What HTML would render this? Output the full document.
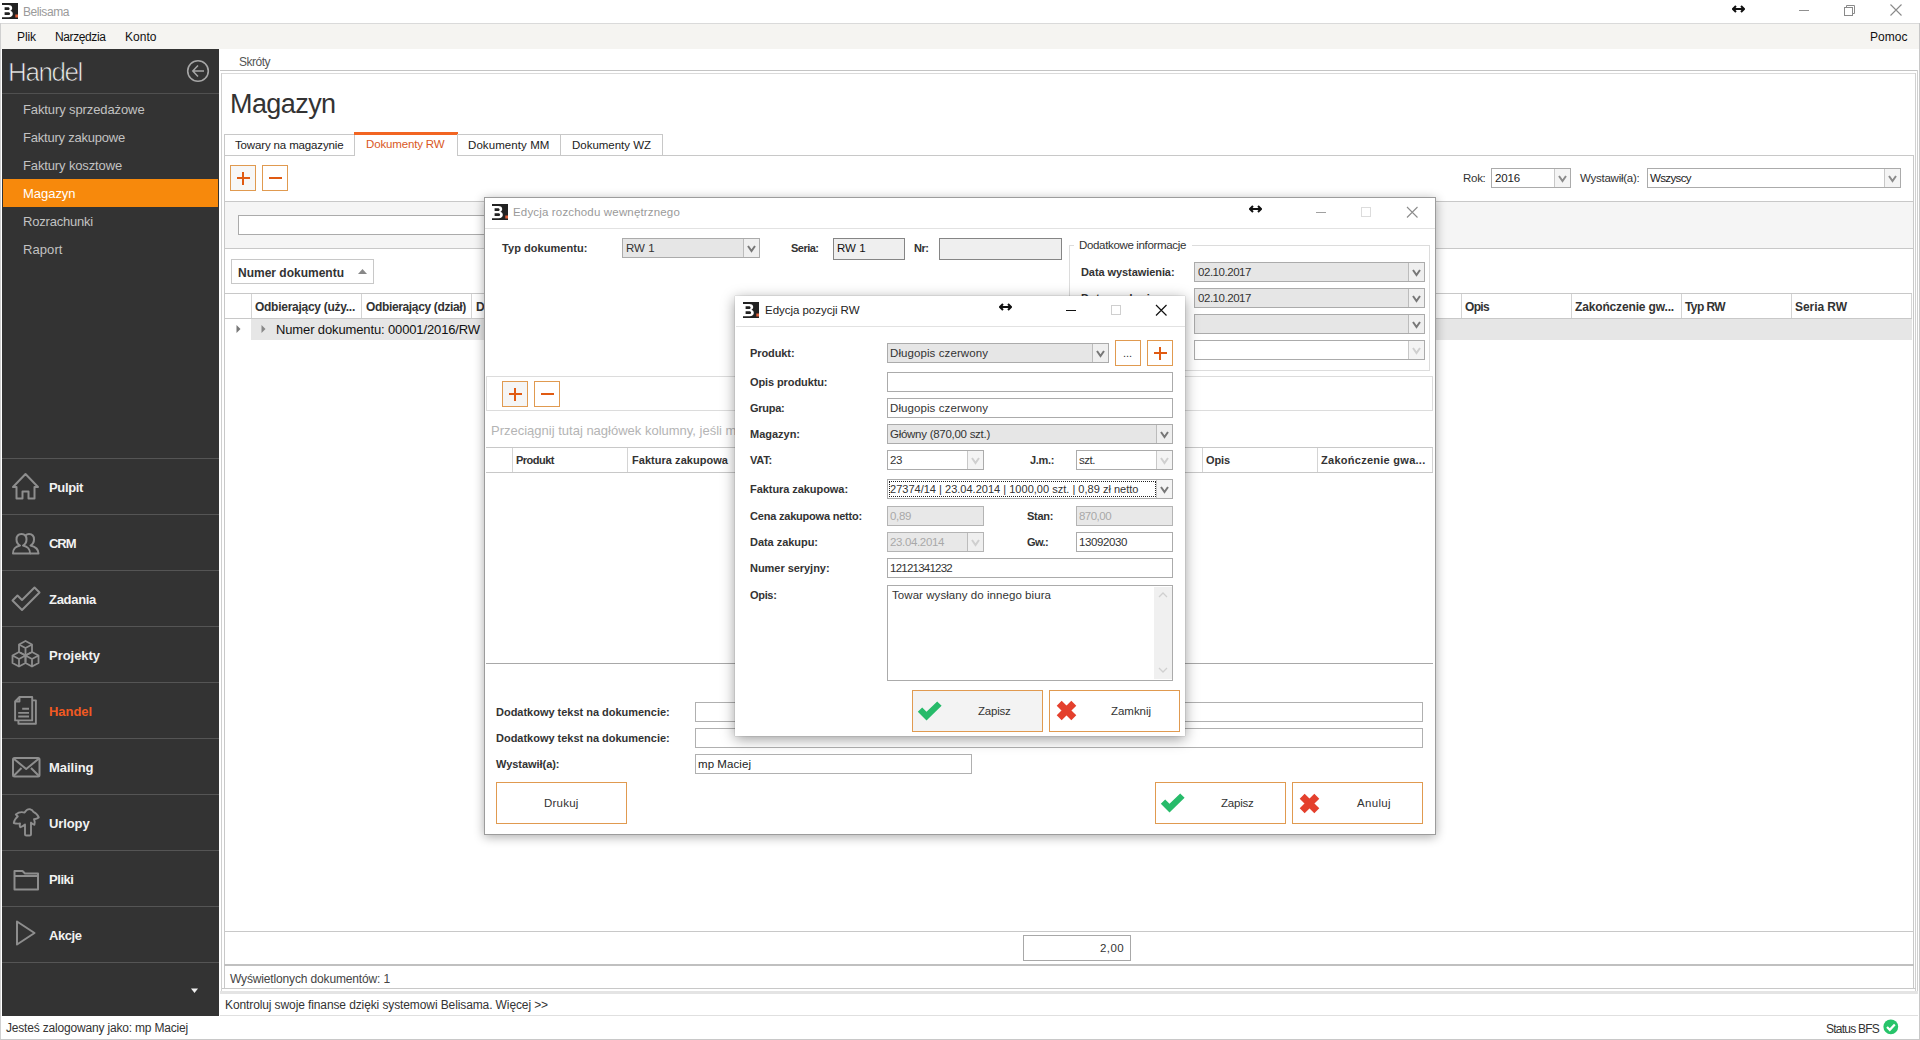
<!DOCTYPE html><html><head><meta charset="utf-8"><style>
html,body{margin:0;padding:0;width:1920px;height:1040px;overflow:hidden;background:#fff;font-family:"Liberation Sans",sans-serif;}
.b{position:absolute;box-sizing:border-box;}
.t{position:absolute;line-height:1;white-space:nowrap;}
</style></head><body>
<svg class="b" style="left:2px;top:3px;" width="16" height="16" viewBox="0 0 16 16"><rect x="0" y="0" width="16" height="16" fill="#222"/><path fill="#fff" d="M0,2 H6.2 C9,2 10.2,3.3 10.2,5 C10.2,6.4 9.4,7.4 8.3,7.8 C9.8,8.2 10.8,9.3 10.8,11 C10.8,13 9.3,14.2 6.6,14.2 H0 Z"/><path fill="#222" d="M2.6,4.3 H6 C7,4.3 7.6,4.9 7.6,5.7 C7.6,6.5 7,7 6,7 H2.6 Z M2.6,9.2 H6.3 C7.5,9.2 8.1,9.9 8.1,10.8 C8.1,11.7 7.5,12.1 6.3,12.1 H2.6 Z"/><rect x="13.3" y="11.5" width="2.7" height="3" fill="#e0603a"/></svg>
<div class="t" style="left:23px;top:6px;font-size:12px;color:#9a9a9a;letter-spacing:-0.419px;">Belisama</div>
<div class="b" style="left:0px;top:23px;width:1920px;height:1px;background:#dadada"></div>
<div class="b" style="left:1px;top:24px;width:1918px;height:25px;background:#f5f4f1"></div>
<div class="t" style="left:17px;top:31px;font-size:12px;color:#111;letter-spacing:-0.084px;">Plik</div>
<div class="t" style="left:55px;top:31px;font-size:12px;color:#111;letter-spacing:-0.391px;">Narzędzia</div>
<div class="t" style="left:125px;top:31px;font-size:12px;color:#111;letter-spacing:0.028px;">Konto</div>
<div class="t" style="left:1870px;top:31px;font-size:12px;color:#111;letter-spacing:0.030px;">Pomoc</div>
<div class="b" style="left:0px;top:23px;width:1px;height:1017px;background:#d0d0d0"></div>
<div class="b" style="left:1919px;top:23px;width:1px;height:1017px;background:#c8c8c8"></div>
<svg class="b" style="left:1732px;top:4px;" width="13" height="10" viewBox="0 0 13 10"><path d="M1,5 H12 M4,2 L1,5 L4,8 M9,2 L12,5 L9,8" stroke="#111" stroke-width="2" fill="none" stroke-linejoin="miter"/></svg>
<div class="b" style="left:1799px;top:10px;width:10px;height:1px;background:#909090"></div>
<svg class="b" style="left:1843px;top:4px;" width="13" height="12" viewBox="0 0 13 12"><rect x="1.5" y="3.5" width="8" height="8" fill="none" stroke="#8a8a8a"/><path d="M3.5,3.5 V1.5 H11.5 V9.5 H9.5" fill="none" stroke="#8a8a8a"/></svg>
<svg class="b" style="left:1889px;top:4px;" width="15" height="12" viewBox="0 0 15 12"><path d="M1.5,0.5 L12.5,11.5 M12.5,0.5 L1.5,11.5" stroke="#8a8a8a" stroke-width="1.1"/></svg>
<div class="b" style="left:2px;top:49px;width:217px;height:967px;background:#333333"></div>
<div class="t" style="left:8px;top:59px;font-size:26px;color:#ececec;letter-spacing:-1.399px;-webkit-text-stroke:0.7px #333">Handel</div>
<svg class="b" style="left:186px;top:59px;" width="24" height="24" viewBox="0 0 24 24"><circle cx="12" cy="12" r="10.3" fill="none" stroke="#a6a6a6" stroke-width="1.6"/><path d="M6.8,12 H18 M12,6.4 L6.8,12 L12,17.6" fill="none" stroke="#a6a6a6" stroke-width="1.5"/></svg>
<div class="b" style="left:2px;top:93px;width:217px;height:1px;background:#505050"></div>
<div class="b" style="left:3px;top:179px;width:215px;height:28px;background:#f7890c"></div>
<div class="t" style="left:23px;top:103px;font-size:13px;color:#c2c2c2;letter-spacing:-0.108px;">Faktury sprzedażowe</div>
<div class="t" style="left:23px;top:131px;font-size:13px;color:#c2c2c2;letter-spacing:-0.218px;">Faktury zakupowe</div>
<div class="t" style="left:23px;top:159px;font-size:13px;color:#c2c2c2;letter-spacing:-0.134px;">Faktury kosztowe</div>
<div class="t" style="left:23px;top:187px;font-size:13px;color:#fff;letter-spacing:-0.036px;">Magazyn</div>
<div class="t" style="left:23px;top:215px;font-size:13px;color:#c2c2c2;letter-spacing:-0.205px;">Rozrachunki</div>
<div class="t" style="left:23px;top:243px;font-size:13px;color:#c2c2c2;letter-spacing:0.080px;">Raport</div>
<div class="b" style="left:2px;top:458px;width:217px;height:1px;background:#555555"></div>
<div class="b" style="left:2px;top:514px;width:217px;height:1px;background:#555555"></div>
<div class="b" style="left:2px;top:570px;width:217px;height:1px;background:#555555"></div>
<div class="b" style="left:2px;top:626px;width:217px;height:1px;background:#555555"></div>
<div class="b" style="left:2px;top:682px;width:217px;height:1px;background:#555555"></div>
<div class="b" style="left:2px;top:738px;width:217px;height:1px;background:#555555"></div>
<div class="b" style="left:2px;top:794px;width:217px;height:1px;background:#555555"></div>
<div class="b" style="left:2px;top:850px;width:217px;height:1px;background:#555555"></div>
<div class="b" style="left:2px;top:906px;width:217px;height:1px;background:#555555"></div>
<div class="b" style="left:2px;top:962px;width:217px;height:1px;background:#555555"></div>
<div class="t" style="left:49px;top:481px;font-size:13px;font-weight:bold;color:#f2f2f2;letter-spacing:-0.351px;">Pulpit</div>
<div class="t" style="left:49px;top:537px;font-size:13px;font-weight:bold;color:#f2f2f2;letter-spacing:-1.035px;">CRM</div>
<div class="t" style="left:49px;top:593px;font-size:13px;font-weight:bold;color:#f2f2f2;letter-spacing:-0.304px;">Zadania</div>
<div class="t" style="left:49px;top:649px;font-size:13px;font-weight:bold;color:#f2f2f2;letter-spacing:-0.038px;">Projekty</div>
<div class="t" style="left:49px;top:705px;font-size:13px;font-weight:bold;color:#f15a22;letter-spacing:-0.057px;">Handel</div>
<div class="t" style="left:49px;top:761px;font-size:13px;font-weight:bold;color:#f2f2f2;letter-spacing:-0.039px;">Mailing</div>
<div class="t" style="left:49px;top:817px;font-size:13px;font-weight:bold;color:#f2f2f2;letter-spacing:-0.112px;">Urlopy</div>
<div class="t" style="left:49px;top:873px;font-size:13px;font-weight:bold;color:#f2f2f2;letter-spacing:-0.447px;">Pliki</div>
<div class="t" style="left:49px;top:929px;font-size:13px;font-weight:bold;color:#f2f2f2;letter-spacing:-0.438px;">Akcje</div>
<svg class="b" style="left:10px;top:472px;" width="32" height="30" viewBox="0 0 32 30"><path d="M15.5,2 L3,15 H6.5 V26.5 H12.5 V19.5 H18.5 V26.5 H24.5 V15 H28 Z" fill="none" stroke="#8e8e8e" stroke-width="2" stroke-linejoin="round"/></svg>
<svg class="b" style="left:10px;top:532px;" width="32" height="26" viewBox="0 0 32 26"><path d="M3,21.5 C3,16 6,14.5 10,13.5 C7.5,12 6.5,10 6.5,7.5 C6.5,4 8.5,2 11.5,2 C14.5,2 16.5,4 16.5,7.5 C16.5,10 15.5,12 13,13.5 C17,14.5 20,16 20,21.5 Z" fill="none" stroke="#8e8e8e" stroke-width="2" stroke-linejoin="round"/><path d="M15.5,3.5 C16.5,2.5 17.5,2 19,2 C22,2 24,4 24,7.5 C24,10 23,12 20.5,13.5 C24.5,14.5 28.5,16 28.5,21.5 H20" fill="none" stroke="#8e8e8e" stroke-width="2" stroke-linejoin="round"/></svg>
<svg class="b" style="left:10px;top:586px;" width="32" height="28" viewBox="0 0 32 28"><path d="M2.5,14.5 L7.5,9.5 L12,14 L24.5,1.5 L29.5,6.5 L12,24 Z" fill="none" stroke="#8e8e8e" stroke-width="2" stroke-linejoin="round"/></svg>
<svg class="b" style="left:10px;top:639px;" width="32" height="31" viewBox="0 0 32 31"><g fill="none" stroke="#8e8e8e" stroke-width="1.8" stroke-linejoin="round"><path d="M15.5,2 L22,5.5 V13 L15.5,16.5 L9,13 V5.5 Z M9,5.5 L15.5,9 L22,5.5 M15.5,9 V16.5"/><path d="M9,13 L15.5,16.5 V24 L9,27.5 L2.5,24 V16.5 Z M2.5,16.5 L9,20 L15.5,16.5 M9,20 V27.5"/><path d="M22,13 L28.5,16.5 V24 L22,27.5 L15.5,24 V16.5 Z M15.5,16.5 L22,20 L28.5,16.5 M22,20 V27.5"/></g></svg>
<svg class="b" style="left:10px;top:693px;" width="32" height="34" viewBox="0 0 32 34"><g fill="none" stroke="#8e8e8e" stroke-width="1.9" stroke-linejoin="round"><path d="M22.2,7.4 H25.9 V30.8 H8.4 V27.4"/><path d="M5.1,8.5 L9.5,4 H22.2 V27.4 H5.1 Z M5.1,8.5 H9.5 V4"/><path d="M12.2,15.8 H19 M8.2,19.9 H19 M8.2,23.5 H19"/></g></svg>
<svg class="b" style="left:10px;top:755px;" width="32" height="24" viewBox="0 0 32 24"><g fill="none" stroke="#8e8e8e" stroke-width="2" stroke-linejoin="round"><rect x="3" y="3" width="26.5" height="18.5" rx="1.5"/><path d="M3.5,3.5 L16.2,14 L29,3.5 M3.5,21 L11.5,13 M29,21 L21,13"/></g></svg>
<svg class="b" style="left:10px;top:806px;" width="32" height="32" viewBox="0 0 32 32"><path d="M15,28.5 V18.5 C13.2,20 11.8,21 10.2,21.2 C9.6,20 9.6,18.8 10,17.4 C8,17.8 5.6,17.6 3.8,17 C4.2,14.2 5.6,12 7.8,10.4 C6.8,9.8 6.2,9.2 5.8,8.4 C8.8,6 12,5.8 14.6,6.6 C16,4.2 18,3 19.8,3.2 C21.6,3.8 23,4.8 23.4,5.8 C25.8,6.8 27.8,9 28.8,11.4 C27.2,12.6 25.6,13 24,13.2 C24.8,15 24.9,17 24.4,18.8 C23,18.4 22,17.6 21,16.6 V28.5 C21,29.3 20.4,29.5 19.6,29.5 H16.4 C15.6,29.5 15,29.3 15,28.5 Z" fill="none" stroke="#8e8e8e" stroke-width="1.9" stroke-linejoin="round"/></svg>
<svg class="b" style="left:10px;top:867px;" width="32" height="26" viewBox="0 0 32 26"><path d="M4.5,4 H12.5 L15,6.5 H28 V22.5 H4.5 Z M4.5,9 H28" fill="none" stroke="#8e8e8e" stroke-width="2" stroke-linejoin="round"/></svg>
<svg class="b" style="left:10px;top:918px;" width="32" height="30" viewBox="0 0 32 30"><path d="M7,3.5 L24.5,15 L7,26.5 Z" fill="none" stroke="#8e8e8e" stroke-width="2" stroke-linejoin="round"/></svg>
<svg class="b" style="left:190px;top:987px;" width="10" height="8" viewBox="0 0 10 8"><path d="M1,1.5 H8 L4.5,6 Z" fill="#f0f0f0"/></svg>
<div class="t" style="left:239px;top:56px;font-size:12px;color:#555;letter-spacing:-0.501px;">Skróty</div>
<div class="b" style="left:220px;top:70px;width:1698px;height:1px;background:#c4c4c4"></div>
<div class="b" style="left:1917px;top:70px;width:1px;height:921px;background:#d0d0d0"></div>
<div class="b" style="left:221px;top:73px;width:1695px;height:1px;background:#dadada"></div>
<div class="b" style="left:221px;top:73px;width:1px;height:918px;background:#d0d0d0"></div>
<div class="b" style="left:1915px;top:73px;width:1px;height:918px;background:#d0d0d0"></div>
<div class="t" style="left:230px;top:91px;font-size:27px;color:#333;letter-spacing:-0.579px;">Magazyn</div>
<div class="b" style="left:224px;top:134px;width:131px;height:22px;background:#fff;border:1px solid #c8c8c8;border-bottom:none"></div>
<div class="b" style="left:354px;top:132px;width:104px;height:24px;background:#fff;border-left:1px solid #c8c8c8;border-right:1px solid #c8c8c8"></div>
<div class="b" style="left:354px;top:132px;width:104px;height:3px;background:#f26522"></div>
<div class="b" style="left:457px;top:134px;width:105px;height:22px;background:#fff;border:1px solid #c8c8c8;border-bottom:none"></div>
<div class="b" style="left:560px;top:134px;width:103px;height:22px;background:#fff;border:1px solid #c8c8c8;border-bottom:none"></div>
<div class="t" style="left:235px;top:140px;font-size:11.5px;color:#222;letter-spacing:-0.143px;">Towary na magazynie</div>
<div class="t" style="left:366px;top:139px;font-size:11.5px;color:#d9581e;letter-spacing:-0.151px;">Dokumenty RW</div>
<div class="t" style="left:468px;top:140px;font-size:11.5px;color:#222;letter-spacing:0.082px;">Dokumenty MM</div>
<div class="t" style="left:572px;top:140px;font-size:11.5px;color:#222;letter-spacing:-0.020px;">Dokumenty WZ</div>
<div class="b" style="left:224px;top:155px;width:1690px;height:834px;border:1px solid #c8c8c8;border-bottom:none"></div>
<div class="b" style="left:355px;top:155px;width:102px;height:1px;background:#fff"></div>
<div class="b" style="left:230px;top:165px;width:26px;height:26px;background:#f7f7f7;border:1px solid #e09a50"></div>
<div class="b" style="left:237px;top:177px;width:13px;height:2px;background:#e05a12"></div>
<div class="b" style="left:242px;top:172px;width:2px;height:13px;background:#e05a12"></div>
<div class="b" style="left:262px;top:165px;width:26px;height:26px;background:#fff;border:1px solid #e09a50"></div>
<div class="b" style="left:269px;top:177px;width:13px;height:2px;background:#e05a12"></div>
<div class="t" style="left:1463px;top:173px;font-size:11.5px;color:#333;letter-spacing:-0.286px;">Rok:</div>
<div class="b" style="left:1491px;top:168px;width:80px;height:20px;background:#fff;border:1px solid #ababab"></div>
<div class="b" style="left:1554px;top:169px;width:1px;height:18px;background:#c8c8c8"></div>
<div class="b" style="left:1555px;top:169px;width:15px;height:18px;background:#f4f4f4"></div>
<svg class="b" style="left:1557px;top:174px;" width="11" height="9" viewBox="0 0 11 9"><polyline points="2,2 5.5,7 9,2" fill="none" stroke="#8a8a8a" stroke-width="2"/></svg>
<div class="t" style="left:1495px;top:173px;font-size:11.5px;color:#222;letter-spacing:-0.146px;">2016</div>
<div class="t" style="left:1580px;top:173px;font-size:11.5px;color:#333;letter-spacing:-0.251px;">Wystawił(a):</div>
<div class="b" style="left:1647px;top:168px;width:254px;height:20px;background:#fff;border:1px solid #ababab"></div>
<div class="b" style="left:1884px;top:169px;width:1px;height:18px;background:#c8c8c8"></div>
<div class="b" style="left:1885px;top:169px;width:15px;height:18px;background:#f4f4f4"></div>
<svg class="b" style="left:1887px;top:174px;" width="11" height="9" viewBox="0 0 11 9"><polyline points="2,2 5.5,7 9,2" fill="none" stroke="#8a8a8a" stroke-width="2"/></svg>
<div class="t" style="left:1650px;top:173px;font-size:11.5px;color:#222;letter-spacing:-0.622px;">Wszyscy</div>
<div class="b" style="left:225px;top:201px;width:1688px;height:48px;background:#f5f5f5;border-top:1px solid #c8c8c8;border-bottom:1px solid #c8c8c8"></div>
<div class="b" style="left:238px;top:215px;width:800px;height:20px;background:#fff;border:1px solid #ababab"></div>
<div class="b" style="left:231px;top:259px;width:143px;height:25px;border:1px solid #c8c8c8;background:#fff"></div>
<div class="t" style="left:238px;top:267px;font-size:12px;font-weight:bold;color:#333;letter-spacing:-0.001px;">Numer dokumentu</div>
<svg class="b" style="left:357px;top:268px;" width="11" height="7" viewBox="0 0 11 7"><path d="M1,6 L5.5,1 L10,6 Z" fill="#888"/></svg>
<div class="b" style="left:225px;top:293px;width:1687px;height:1px;background:#c8c8c8"></div>
<div class="b" style="left:225px;top:318px;width:1687px;height:1px;background:#c8c8c8"></div>
<div class="b" style="left:251px;top:294px;width:1px;height:24px;background:#d4d4d4"></div>
<div class="b" style="left:361px;top:294px;width:1px;height:24px;background:#d4d4d4"></div>
<div class="b" style="left:471px;top:294px;width:1px;height:24px;background:#d4d4d4"></div>
<div class="b" style="left:581px;top:294px;width:1px;height:24px;background:#d4d4d4"></div>
<div class="b" style="left:691px;top:294px;width:1px;height:24px;background:#d4d4d4"></div>
<div class="b" style="left:801px;top:294px;width:1px;height:24px;background:#d4d4d4"></div>
<div class="b" style="left:911px;top:294px;width:1px;height:24px;background:#d4d4d4"></div>
<div class="b" style="left:1021px;top:294px;width:1px;height:24px;background:#d4d4d4"></div>
<div class="b" style="left:1131px;top:294px;width:1px;height:24px;background:#d4d4d4"></div>
<div class="b" style="left:1241px;top:294px;width:1px;height:24px;background:#d4d4d4"></div>
<div class="b" style="left:1351px;top:294px;width:1px;height:24px;background:#d4d4d4"></div>
<div class="b" style="left:1461px;top:294px;width:1px;height:24px;background:#d4d4d4"></div>
<div class="b" style="left:1571px;top:294px;width:1px;height:24px;background:#d4d4d4"></div>
<div class="b" style="left:1681px;top:294px;width:1px;height:24px;background:#d4d4d4"></div>
<div class="b" style="left:1791px;top:294px;width:1px;height:24px;background:#d4d4d4"></div>
<div class="b" style="left:1911px;top:294px;width:1px;height:24px;background:#d4d4d4"></div>
<div class="t" style="left:255px;top:301px;font-size:12px;font-weight:bold;color:#333;letter-spacing:-0.271px;">Odbierający (uży...</div>
<div class="t" style="left:366px;top:301px;font-size:12px;font-weight:bold;color:#333;letter-spacing:-0.353px;">Odbierający (dział)</div>
<div class="t" style="left:476px;top:301px;font-size:12px;font-weight:bold;color:#333;letter-spacing:0.039px;max-width:105px;overflow:hidden">Data wystawienia</div>
<div class="t" style="left:1465px;top:301px;font-size:12px;font-weight:bold;color:#333;letter-spacing:-0.668px;">Opis</div>
<div class="t" style="left:1575px;top:301px;font-size:12px;font-weight:bold;color:#333;letter-spacing:-0.152px;">Zakończenie gw...</div>
<div class="t" style="left:1685px;top:301px;font-size:12px;font-weight:bold;color:#333;letter-spacing:-0.592px;">Typ RW</div>
<div class="t" style="left:1795px;top:301px;font-size:12px;font-weight:bold;color:#333;letter-spacing:-0.058px;">Seria RW</div>
<div class="b" style="left:251px;top:319px;width:1661px;height:21px;background:#e6e6e6"></div>
<svg class="b" style="left:235px;top:324px;" width="7" height="10" viewBox="0 0 7 10"><path d="M1.5,1 L5.5,5 L1.5,9 Z" fill="#777"/></svg>
<svg class="b" style="left:260px;top:324px;" width="7" height="10" viewBox="0 0 7 10"><path d="M1.5,1 L5.5,5 L1.5,9 Z" fill="#888"/></svg>
<div class="t" style="left:276px;top:323px;font-size:13px;color:#111;letter-spacing:-0.129px;">Numer dokumentu: 00001/2016/RW</div>
<div class="b" style="left:225px;top:931px;width:1688px;height:1px;background:#c8c8c8"></div>
<div class="b" style="left:1023px;top:935px;width:108px;height:26px;background:#fff;border:1px solid #a8a8a8"></div>
<div class="t" style="left:1100px;top:943px;font-size:11.5px;color:#333;letter-spacing:0.404px;">2,00</div>
<div class="b" style="left:224px;top:964px;width:1690px;height:2px;background:#c0c0c0"></div>
<div class="t" style="left:230px;top:973px;font-size:12px;color:#444;letter-spacing:-0.147px;">Wyświetlonych dokumentów: 1</div>
<div class="b" style="left:222px;top:988px;width:1694px;height:1px;background:#c8c8c8"></div>
<div class="b" style="left:220px;top:991px;width:1698px;height:3px;background:#e4e4e4"></div>
<div class="t" style="left:225px;top:999px;font-size:12px;color:#333;letter-spacing:-0.108px;">Kontroluj swoje finanse dzięki systemowi Belisama. Więcej &gt;&gt;</div>
<div class="b" style="left:220px;top:1015px;width:1698px;height:1px;background:#e0e0e0"></div>
<div class="t" style="left:6px;top:1022px;font-size:12px;color:#333;letter-spacing:-0.184px;">Jesteś zalogowany jako: mp Maciej</div>
<div class="t" style="left:1826px;top:1023px;font-size:12px;color:#333;letter-spacing:-0.769px;">Status BFS</div>
<svg class="b" style="left:1883px;top:1019px;" width="16" height="16" viewBox="0 0 16 16"><circle cx="7.8" cy="7.8" r="7.4" fill="#27c46a"/><path d="M4,8 L6.8,10.8 L11.8,5.5" fill="none" stroke="#fff" stroke-width="2.2"/></svg>
<div class="b" style="left:0px;top:1039px;width:1920px;height:1px;background:#c8c8c8"></div>
<div class="b" style="left:484px;top:197px;width:952px;height:638px;background:#fff;border:1px solid #9c9c9c;box-shadow:0 2px 10px rgba(0,0,0,0.33)"></div>
<div class="b" style="left:485px;top:228px;width:950px;height:1px;background:#e2e2e2"></div>
<svg class="b" style="left:492px;top:204px;" width="16" height="16" viewBox="0 0 16 16"><rect x="0" y="0" width="16" height="16" fill="#222"/><path fill="#fff" d="M0,2 H6.2 C9,2 10.2,3.3 10.2,5 C10.2,6.4 9.4,7.4 8.3,7.8 C9.8,8.2 10.8,9.3 10.8,11 C10.8,13 9.3,14.2 6.6,14.2 H0 Z"/><path fill="#222" d="M2.6,4.3 H6 C7,4.3 7.6,4.9 7.6,5.7 C7.6,6.5 7,7 6,7 H2.6 Z M2.6,9.2 H6.3 C7.5,9.2 8.1,9.9 8.1,10.8 C8.1,11.7 7.5,12.1 6.3,12.1 H2.6 Z"/><rect x="13.3" y="11.5" width="2.7" height="3" fill="#e0603a"/></svg>
<div class="t" style="left:513px;top:207px;font-size:11.5px;color:#9a9a9a;letter-spacing:0.165px;">Edycja rozchodu wewnętrznego</div>
<svg class="b" style="left:1249px;top:204px;" width="13" height="10" viewBox="0 0 13 10"><path d="M1,5 H12 M4,2 L1,5 L4,8 M9,2 L12,5 L9,8" stroke="#111" stroke-width="2" fill="none"/></svg>
<div class="b" style="left:1316px;top:212px;width:10px;height:1px;background:#a0a0a0"></div>
<svg class="b" style="left:1360px;top:206px;" width="12" height="12" viewBox="0 0 12 12"><rect x="1.5" y="1.5" width="9" height="9" fill="none" stroke="#dcdcdc"/></svg>
<svg class="b" style="left:1406px;top:206px;" width="13" height="13" viewBox="0 0 13 13"><path d="M1,1 L11.5,11.5 M11.5,1 L1,11.5" stroke="#8c8c8c" stroke-width="1.1"/></svg>
<div class="t" style="left:502px;top:243px;font-size:11px;font-weight:bold;color:#333;letter-spacing:0.055px;">Typ dokumentu:</div>
<div class="b" style="left:622px;top:238px;width:138px;height:20px;background:#e6e6e6;border:1px solid #ababab"></div>
<div class="b" style="left:743px;top:239px;width:1px;height:18px;background:#bcbcbc"></div>
<div class="b" style="left:744px;top:239px;width:15px;height:18px;background:#efefef"></div>
<svg class="b" style="left:746px;top:244px;" width="11" height="9" viewBox="0 0 11 9"><polyline points="2,2 5.5,7 9,2" fill="none" stroke="#777" stroke-width="2"/></svg>
<div class="t" style="left:626px;top:243px;font-size:11.5px;color:#333;">RW 1</div>
<div class="t" style="left:791px;top:243px;font-size:11px;font-weight:bold;color:#333;letter-spacing:-0.512px;">Seria:</div>
<div class="b" style="left:833px;top:238px;width:72px;height:22px;background:#efefef;border:1px solid #858585"></div>
<div class="t" style="left:837px;top:243px;font-size:11.5px;color:#111;">RW 1</div>
<div class="t" style="left:914px;top:243px;font-size:11px;font-weight:bold;color:#333;letter-spacing:-0.463px;">Nr:</div>
<div class="b" style="left:939px;top:238px;width:123px;height:22px;background:#efefef;border:1px solid #858585"></div>
<div class="b" style="left:1069px;top:245px;width:361px;height:126px;border:1px solid #dcdcdc"></div>
<div class="b" style="left:1074px;top:238px;width:118px;height:14px;background:#fff"></div>
<div class="t" style="left:1079px;top:240px;font-size:11.5px;color:#333;letter-spacing:-0.339px;">Dodatkowe informacje</div>
<div class="t" style="left:1081px;top:267px;font-size:11px;font-weight:bold;color:#333;letter-spacing:-0.074px;">Data wystawienia:</div>
<div class="t" style="left:1081px;top:293px;font-size:11px;font-weight:bold;color:#333;letter-spacing:0.464px;">Data wydania:</div>
<div class="b" style="left:1194px;top:262px;width:231px;height:20px;background:#e6e6e6;border:1px solid #ababab"></div>
<div class="b" style="left:1408px;top:263px;width:1px;height:18px;background:#bcbcbc"></div>
<div class="b" style="left:1409px;top:263px;width:15px;height:18px;background:#efefef"></div>
<svg class="b" style="left:1411px;top:268px;" width="11" height="9" viewBox="0 0 11 9"><polyline points="2,2 5.5,7 9,2" fill="none" stroke="#777" stroke-width="2"/></svg>
<div class="b" style="left:1194px;top:288px;width:231px;height:20px;background:#e6e6e6;border:1px solid #ababab"></div>
<div class="b" style="left:1408px;top:289px;width:1px;height:18px;background:#bcbcbc"></div>
<div class="b" style="left:1409px;top:289px;width:15px;height:18px;background:#efefef"></div>
<svg class="b" style="left:1411px;top:294px;" width="11" height="9" viewBox="0 0 11 9"><polyline points="2,2 5.5,7 9,2" fill="none" stroke="#777" stroke-width="2"/></svg>
<div class="b" style="left:1194px;top:314px;width:231px;height:20px;background:#e6e6e6;border:1px solid #ababab"></div>
<div class="b" style="left:1408px;top:315px;width:1px;height:18px;background:#bcbcbc"></div>
<div class="b" style="left:1409px;top:315px;width:15px;height:18px;background:#efefef"></div>
<svg class="b" style="left:1411px;top:320px;" width="11" height="9" viewBox="0 0 11 9"><polyline points="2,2 5.5,7 9,2" fill="none" stroke="#777" stroke-width="2"/></svg>
<div class="b" style="left:1194px;top:340px;width:231px;height:20px;background:#fff;border:1px solid #ababab"></div>
<div class="b" style="left:1408px;top:341px;width:1px;height:18px;background:#c8c8c8"></div>
<div class="b" style="left:1409px;top:341px;width:15px;height:18px;background:#f4f4f4"></div>
<svg class="b" style="left:1411px;top:346px;" width="11" height="9" viewBox="0 0 11 9"><polyline points="2,2 5.5,7 9,2" fill="none" stroke="#cfcfcf" stroke-width="2"/></svg>
<div class="t" style="left:1198px;top:267px;font-size:11.5px;color:#333;letter-spacing:-0.456px;">02.10.2017</div>
<div class="t" style="left:1198px;top:293px;font-size:11.5px;color:#333;letter-spacing:-0.456px;">02.10.2017</div>
<div class="b" style="left:486px;top:376px;width:947px;height:35px;border:1px solid #dcdcdc"></div>
<div class="b" style="left:502px;top:381px;width:26px;height:26px;background:#f5f5f5;border:1px solid #e09a50"></div>
<div class="b" style="left:509px;top:393px;width:13px;height:2px;background:#e05a12"></div>
<div class="b" style="left:514px;top:388px;width:2px;height:13px;background:#e05a12"></div>
<div class="b" style="left:534px;top:381px;width:26px;height:26px;background:#fff;border:1px solid #e09a50"></div>
<div class="b" style="left:541px;top:393px;width:13px;height:2px;background:#e05a12"></div>
<div class="t" style="left:491px;top:424px;font-size:13px;color:#b4b4b4;">Przeciągnij tutaj nagłówek kolumny, jeśli ma ona być grupowana</div>
<div class="b" style="left:486px;top:447px;width:947px;height:1px;background:#c8c8c8"></div>
<div class="b" style="left:486px;top:472px;width:947px;height:1px;background:#c8c8c8"></div>
<div class="b" style="left:512px;top:448px;width:1px;height:24px;background:#d4d4d4"></div>
<div class="b" style="left:627px;top:448px;width:1px;height:24px;background:#d4d4d4"></div>
<div class="b" style="left:742px;top:448px;width:1px;height:24px;background:#d4d4d4"></div>
<div class="b" style="left:857px;top:448px;width:1px;height:24px;background:#d4d4d4"></div>
<div class="b" style="left:972px;top:448px;width:1px;height:24px;background:#d4d4d4"></div>
<div class="b" style="left:1087px;top:448px;width:1px;height:24px;background:#d4d4d4"></div>
<div class="b" style="left:1202px;top:448px;width:1px;height:24px;background:#d4d4d4"></div>
<div class="b" style="left:1317px;top:448px;width:1px;height:24px;background:#d4d4d4"></div>
<div class="b" style="left:1432px;top:448px;width:1px;height:24px;background:#d4d4d4"></div>
<div class="t" style="left:516px;top:455px;font-size:11px;font-weight:bold;color:#333;letter-spacing:-0.508px;">Produkt</div>
<div class="t" style="left:632px;top:455px;font-size:11px;font-weight:bold;color:#333;letter-spacing:0.040px;">Faktura zakupowa</div>
<div class="t" style="left:1206px;top:455px;font-size:11px;font-weight:bold;color:#333;letter-spacing:-0.112px;">Opis</div>
<div class="t" style="left:1321px;top:455px;font-size:11px;font-weight:bold;color:#333;letter-spacing:0.270px;">Zakończenie gwa...</div>
<div class="b" style="left:486px;top:663px;width:947px;height:1px;background:#a8a8a8"></div>
<div class="t" style="left:496px;top:707px;font-size:11px;font-weight:bold;color:#333;letter-spacing:-0.017px;">Dodatkowy tekst na dokumencie:</div>
<div class="t" style="left:496px;top:733px;font-size:11px;font-weight:bold;color:#333;letter-spacing:-0.017px;">Dodatkowy tekst na dokumencie:</div>
<div class="t" style="left:496px;top:759px;font-size:11px;font-weight:bold;color:#333;letter-spacing:-0.040px;">Wystawił(a):</div>
<div class="b" style="left:695px;top:702px;width:728px;height:20px;background:#fff;border:1px solid #b0b0b0"></div>
<div class="b" style="left:695px;top:728px;width:728px;height:20px;background:#fff;border:1px solid #b0b0b0"></div>
<div class="b" style="left:695px;top:754px;width:277px;height:20px;background:#fff;border:1px solid #b0b0b0"></div>
<div class="t" style="left:698px;top:759px;font-size:11.5px;color:#222;letter-spacing:0.067px;">mp Maciej</div>
<div class="b" style="left:496px;top:782px;width:131px;height:42px;background:#fff;border:1px solid #e09a50"></div>
<div class="t" style="left:544px;top:798px;font-size:11.5px;color:#333;letter-spacing:0.212px;">Drukuj</div>
<div class="b" style="left:1155px;top:782px;width:131px;height:42px;background:#fff;border:1px solid #e09a50"></div>
<svg class="b" style="left:1160px;top:793px;" width="26" height="21" viewBox="0 0 26 21"><polygon points="0.8,10.8 5.2,6.6 9.5,10.8 20.2,0.5 24.6,4.7 9.5,19.6" fill="#27bb6a"/></svg>
<div class="t" style="left:1221px;top:798px;font-size:11.5px;color:#333;letter-spacing:-0.229px;">Zapisz</div>
<div class="b" style="left:1292px;top:782px;width:131px;height:42px;background:#fff;border:1px solid #e09a50"></div>
<svg class="b" style="left:1299px;top:793px;" width="22" height="21" viewBox="0 0 22 21"><path d="M3.2,3.2 L17.8,17.8 M17.8,3.2 L3.2,17.8" stroke="#e4402d" stroke-width="7"/></svg>
<div class="t" style="left:1357px;top:798px;font-size:11.5px;color:#333;letter-spacing:0.339px;">Anuluj</div>
<div class="b" style="left:735px;top:296px;width:450px;height:440px;background:#fff;box-shadow:0 0 1px rgba(0,0,0,0.35),0 3px 13px rgba(0,0,0,0.40)"></div>
<div class="b" style="left:736px;top:326px;width:449px;height:1px;background:#e2e2e2"></div>
<svg class="b" style="left:743px;top:302px;" width="16" height="16" viewBox="0 0 16 16"><rect x="0" y="0" width="16" height="16" fill="#222"/><path fill="#fff" d="M0,2 H6.2 C9,2 10.2,3.3 10.2,5 C10.2,6.4 9.4,7.4 8.3,7.8 C9.8,8.2 10.8,9.3 10.8,11 C10.8,13 9.3,14.2 6.6,14.2 H0 Z"/><path fill="#222" d="M2.6,4.3 H6 C7,4.3 7.6,4.9 7.6,5.7 C7.6,6.5 7,7 6,7 H2.6 Z M2.6,9.2 H6.3 C7.5,9.2 8.1,9.9 8.1,10.8 C8.1,11.7 7.5,12.1 6.3,12.1 H2.6 Z"/><rect x="13.3" y="11.5" width="2.7" height="3" fill="#e0603a"/></svg>
<div class="t" style="left:765px;top:305px;font-size:11.5px;color:#222;letter-spacing:-0.030px;">Edycja pozycji RW</div>
<svg class="b" style="left:999px;top:302px;" width="13" height="10" viewBox="0 0 13 10"><path d="M1,5 H12 M4,2 L1,5 L4,8 M9,2 L12,5 L9,8" stroke="#111" stroke-width="2" fill="none"/></svg>
<div class="b" style="left:1066px;top:310px;width:10px;height:1px;background:#111"></div>
<svg class="b" style="left:1110px;top:304px;" width="12" height="12" viewBox="0 0 12 12"><rect x="1.5" y="1.5" width="9" height="9" fill="none" stroke="#cfcfcf"/></svg>
<svg class="b" style="left:1155px;top:304px;" width="13" height="13" viewBox="0 0 13 13"><path d="M1,1 L11.5,11.5 M11.5,1 L1,11.5" stroke="#111" stroke-width="1.2"/></svg>
<div class="t" style="left:750px;top:348px;font-size:11px;font-weight:bold;color:#333;letter-spacing:-0.090px;">Produkt:</div>
<div class="t" style="left:750px;top:377px;font-size:11px;font-weight:bold;color:#333;letter-spacing:-0.102px;">Opis produktu:</div>
<div class="t" style="left:750px;top:403px;font-size:11px;font-weight:bold;color:#333;letter-spacing:-0.259px;">Grupa:</div>
<div class="t" style="left:750px;top:429px;font-size:11px;font-weight:bold;color:#333;letter-spacing:-0.015px;">Magazyn:</div>
<div class="t" style="left:750px;top:455px;font-size:11px;font-weight:bold;color:#333;letter-spacing:-0.203px;">VAT:</div>
<div class="t" style="left:750px;top:484px;font-size:11px;font-weight:bold;color:#333;letter-spacing:-0.060px;">Faktura zakupowa:</div>
<div class="t" style="left:750px;top:511px;font-size:11px;font-weight:bold;color:#333;letter-spacing:-0.206px;">Cena zakupowa netto:</div>
<div class="t" style="left:750px;top:537px;font-size:11px;font-weight:bold;color:#333;letter-spacing:-0.038px;">Data zakupu:</div>
<div class="t" style="left:750px;top:563px;font-size:11px;font-weight:bold;color:#333;letter-spacing:-0.042px;">Numer seryjny:</div>
<div class="t" style="left:750px;top:590px;font-size:11px;font-weight:bold;color:#333;letter-spacing:-0.322px;">Opis:</div>
<div class="t" style="left:1030px;top:455px;font-size:11px;font-weight:bold;color:#333;letter-spacing:-0.335px;">J.m.:</div>
<div class="t" style="left:1027px;top:511px;font-size:11px;font-weight:bold;color:#333;letter-spacing:-0.300px;">Stan:</div>
<div class="t" style="left:1027px;top:537px;font-size:11px;font-weight:bold;color:#333;letter-spacing:-0.606px;">Gw.:</div>
<div class="b" style="left:887px;top:343px;width:222px;height:20px;background:#e6e6e6;border:1px solid #ababab"></div>
<div class="b" style="left:1092px;top:344px;width:1px;height:18px;background:#bcbcbc"></div>
<div class="b" style="left:1093px;top:344px;width:15px;height:18px;background:#efefef"></div>
<svg class="b" style="left:1095px;top:349px;" width="11" height="9" viewBox="0 0 11 9"><polyline points="2,2 5.5,7 9,2" fill="none" stroke="#777" stroke-width="2"/></svg>
<div class="t" style="left:890px;top:348px;font-size:11.5px;color:#333;letter-spacing:0.087px;">Długopis czerwony</div>
<div class="b" style="left:1115px;top:340px;width:26px;height:26px;background:#fff;border:1px solid #e09a50"></div>
<div class="t" style="left:1123px;top:348px;font-size:11px;color:#333;">...</div>
<div class="b" style="left:1147px;top:340px;width:26px;height:26px;background:#fff;border:1px solid #e09a50"></div>
<div class="b" style="left:1154px;top:352px;width:13px;height:2px;background:#e05a12"></div>
<div class="b" style="left:1159px;top:347px;width:2px;height:13px;background:#e05a12"></div>
<div class="b" style="left:887px;top:372px;width:286px;height:20px;background:#fff;border:1px solid #ababab"></div>
<div class="b" style="left:887px;top:398px;width:286px;height:20px;background:#fff;border:1px solid #ababab"></div>
<div class="t" style="left:890px;top:403px;font-size:11.5px;color:#333;letter-spacing:0.087px;">Długopis czerwony</div>
<div class="b" style="left:887px;top:424px;width:286px;height:20px;background:#e6e6e6;border:1px solid #ababab"></div>
<div class="b" style="left:1156px;top:425px;width:1px;height:18px;background:#bcbcbc"></div>
<div class="b" style="left:1157px;top:425px;width:15px;height:18px;background:#efefef"></div>
<svg class="b" style="left:1159px;top:430px;" width="11" height="9" viewBox="0 0 11 9"><polyline points="2,2 5.5,7 9,2" fill="none" stroke="#777" stroke-width="2"/></svg>
<div class="t" style="left:890px;top:429px;font-size:11.5px;color:#333;letter-spacing:-0.273px;">Główny (870,00 szt.)</div>
<div class="b" style="left:887px;top:450px;width:97px;height:20px;background:#fff;border:1px solid #ababab"></div>
<div class="b" style="left:967px;top:451px;width:1px;height:18px;background:#c8c8c8"></div>
<div class="b" style="left:968px;top:451px;width:15px;height:18px;background:#f4f4f4"></div>
<svg class="b" style="left:970px;top:456px;" width="11" height="9" viewBox="0 0 11 9"><polyline points="2,2 5.5,7 9,2" fill="none" stroke="#cfcfcf" stroke-width="2"/></svg>
<div class="t" style="left:890px;top:455px;font-size:11.5px;color:#333;letter-spacing:-0.396px;">23</div>
<div class="b" style="left:1076px;top:450px;width:97px;height:20px;background:#fff;border:1px solid #ababab"></div>
<div class="b" style="left:1156px;top:451px;width:1px;height:18px;background:#c8c8c8"></div>
<div class="b" style="left:1157px;top:451px;width:15px;height:18px;background:#f4f4f4"></div>
<svg class="b" style="left:1159px;top:456px;" width="11" height="9" viewBox="0 0 11 9"><polyline points="2,2 5.5,7 9,2" fill="none" stroke="#cfcfcf" stroke-width="2"/></svg>
<div class="t" style="left:1079px;top:455px;font-size:11.5px;color:#333;letter-spacing:-0.473px;">szt.</div>
<div class="b" style="left:887px;top:479px;width:286px;height:20px;background:#fff;border:1px solid #ababab"></div>
<div class="b" style="left:1156px;top:480px;width:1px;height:18px;background:#c8c8c8"></div>
<div class="b" style="left:1157px;top:480px;width:15px;height:18px;background:#f4f4f4"></div>
<svg class="b" style="left:1159px;top:485px;" width="11" height="9" viewBox="0 0 11 9"><polyline points="2,2 5.5,7 9,2" fill="none" stroke="#777" stroke-width="2"/></svg>
<div class="b" style="left:889px;top:481px;width:267px;height:16px;border:1px dotted #222"></div>
<div class="t" style="left:890px;top:484px;font-size:11px;color:#333;letter-spacing:0.015px;">27374/14 | 23.04.2014 | 1000,00 szt. | 0,89 zł netto</div>
<div class="b" style="left:887px;top:506px;width:97px;height:20px;background:#e8e8e8;border:1px solid #b4b4b4"></div>
<div class="t" style="left:890px;top:511px;font-size:11.5px;color:#a8a8a8;letter-spacing:-0.346px;">0,89</div>
<div class="b" style="left:1076px;top:506px;width:97px;height:20px;background:#e8e8e8;border:1px solid #b4b4b4"></div>
<div class="t" style="left:1079px;top:511px;font-size:11.5px;color:#a8a8a8;letter-spacing:-0.529px;">870,00</div>
<div class="b" style="left:887px;top:532px;width:97px;height:20px;background:#e8e8e8;border:1px solid #b4b4b4"></div>
<div class="b" style="left:967px;top:533px;width:1px;height:18px;background:#bcbcbc"></div>
<div class="b" style="left:968px;top:533px;width:15px;height:18px;background:#efefef"></div>
<svg class="b" style="left:970px;top:538px;" width="11" height="9" viewBox="0 0 11 9"><polyline points="2,2 5.5,7 9,2" fill="none" stroke="#cfcfcf" stroke-width="2"/></svg>
<div class="t" style="left:890px;top:537px;font-size:11.5px;color:#a8a8a8;letter-spacing:-0.356px;">23.04.2014</div>
<div class="b" style="left:1076px;top:532px;width:97px;height:20px;background:#fff;border:1px solid #ababab"></div>
<div class="t" style="left:1079px;top:537px;font-size:11.5px;color:#333;letter-spacing:-0.396px;">13092030</div>
<div class="b" style="left:887px;top:558px;width:286px;height:20px;background:#fff;border:1px solid #ababab"></div>
<div class="t" style="left:890px;top:563px;font-size:11.5px;color:#333;letter-spacing:-0.759px;">12121341232</div>
<div class="b" style="left:887px;top:585px;width:286px;height:96px;background:#fff;border:1px solid #ababab"></div>
<div class="b" style="left:1154px;top:587px;width:18px;height:92px;background:#f0f0f0"></div>
<svg class="b" style="left:1157px;top:591px;" width="12" height="8" viewBox="0 0 12 8"><polyline points="2,6 6,2 10,6" fill="none" stroke="#d0d0d0" stroke-width="1.3"/></svg>
<svg class="b" style="left:1157px;top:666px;" width="12" height="8" viewBox="0 0 12 8"><polyline points="2,2 6,6 10,2" fill="none" stroke="#d0d0d0" stroke-width="1.3"/></svg>
<div class="t" style="left:892px;top:590px;font-size:11.5px;color:#333;letter-spacing:0.060px;">Towar wysłany do innego biura</div>
<div class="b" style="left:912px;top:690px;width:131px;height:42px;background:#f3f3f3;border:1px solid #e09a50"></div>
<svg class="b" style="left:917px;top:701px;" width="26" height="21" viewBox="0 0 26 21"><polygon points="0.8,10.8 5.2,6.6 9.5,10.8 20.2,0.5 24.6,4.7 9.5,19.6" fill="#27bb6a"/></svg>
<div class="t" style="left:978px;top:706px;font-size:11.5px;color:#333;letter-spacing:-0.229px;">Zapisz</div>
<div class="b" style="left:1049px;top:690px;width:131px;height:42px;background:#fff;border:1px solid #e09a50"></div>
<svg class="b" style="left:1056px;top:700px;" width="22" height="22" viewBox="0 0 22 22"><path d="M3.2,3.2 L17.8,17.8 M17.8,3.2 L3.2,17.8" stroke="#e4402d" stroke-width="7"/></svg>
<div class="t" style="left:1111px;top:706px;font-size:11.5px;color:#333;letter-spacing:-0.037px;">Zamknij</div>
</body></html>
